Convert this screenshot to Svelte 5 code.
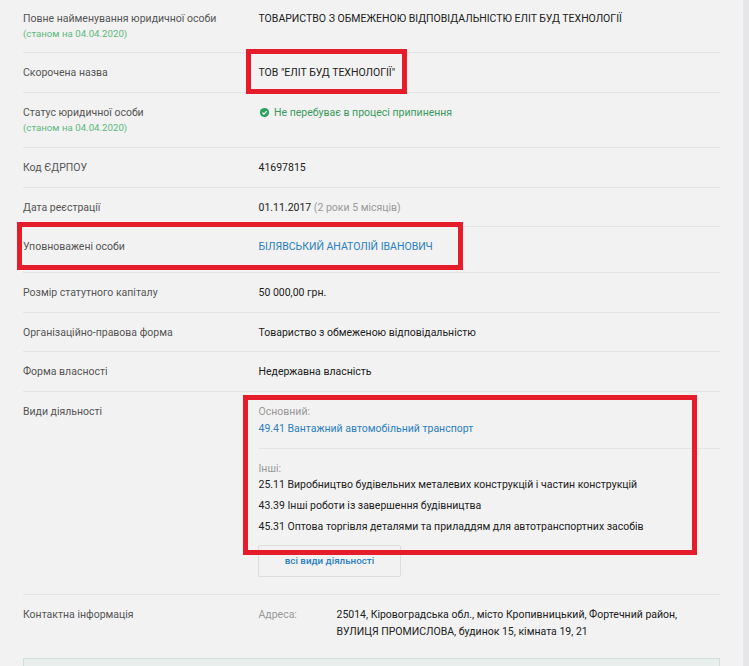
<script>
  // Company registry card. Each row: label (optional "as of" note) + value.
  const asOf = "(станом на 04.04.2020)";
  const others = [
    "25.11 Виробництво будівельних металевих конструкцій і частин конструкцій",
    "43.39 Інші роботи із завершення будівництва",
    "45.31 Оптова торгівля деталями та приладдям для автотранспортних засобів"
  ];
</script>

<div class="page">
  <div class="row first">
    <div class="lbl">Повне найменування юридичної особи<small>{asOf}</small></div>
    <div class="val">ТОВАРИСТВО З ОБМЕЖЕНОЮ ВІДПОВІДАЛЬНІСТЮ ЕЛІТ БУД ТЕХНОЛОГІЇ</div>
  </div>
  <div class="row">
    <div class="lbl">Скорочена назва</div>
    <div class="val">ТОВ "ЕЛІТ БУД ТЕХНОЛОГІЇ"</div>
  </div>
  <div class="row">
    <div class="lbl">Статус юридичної особи<small>{asOf}</small></div>
    <div class="val status">
      <svg width="11" height="11" viewBox="0 0 11 11"><circle cx="5.5" cy="5.5" r="4.6" fill="#27a35a"/><path d="M3.4 5.6l1.5 1.5 2.8-2.9" fill="none" stroke="#fff" stroke-width="1.3"/></svg>
      Не перебуває в процесі припинення
    </div>
  </div>
  <div class="row">
    <div class="lbl">Код ЄДРПОУ</div>
    <div class="val">41697815</div>
  </div>
  <div class="row">
    <div class="lbl">Дата реєстрації</div>
    <div class="val">01.11.2017 <span class="muted">(2 роки 5 місяців)</span></div>
  </div>
  <div class="row person">
    <div class="lbl">Уповноважені особи</div>
    <div class="val"><a href="#top">БІЛЯВСЬКИЙ АНАТОЛІЙ ІВАНОВИЧ</a></div>
  </div>
  <div class="row">
    <div class="lbl">Розмір статутного капіталу</div>
    <div class="val">50 000,00 грн.</div>
  </div>
  <div class="row">
    <div class="lbl">Організаційно-правова форма</div>
    <div class="val">Товариство з обмеженою відповідальністю</div>
  </div>
  <div class="row">
    <div class="lbl">Форма власності</div>
    <div class="val">Недержавна власність</div>
  </div>
  <div class="row acts">
    <div class="lbl">Види діяльності</div>
    <div class="val">
      <div class="muted">Основний:</div>
      <a href="#top">49.41 Вантажний автомобільний транспорт</a>
      <hr />
      <div class="muted others">Інші:</div>
      {#each others as o}
        <div class="act">{o}</div>
      {/each}
      <a class="btn" href="#top">всі види діяльності</a>
    </div>
  </div>
  <div class="row contact">
    <div class="lbl">Контактна інформація</div>
    <div class="val addr">
      <span class="muted">Адреса:</span>
      <span>25014, Кіровоградська обл., місто Кропивницький, Фортечний район,<br />ВУЛИЦЯ ПРОМИСЛОВА, будинок 15, кімната 19, 21</span>
    </div>
  </div>
  <div class="note"></div>

  <!-- red annotation frames and the scrollbar track sit over the page -->
  <div class="mark m1"></div>
  <div class="mark m2"></div>
  <div class="mark m3"></div>
  <div class="track"></div>
</div>

<style>
  :global(body) { margin: 0; background: #f2f2f2; }
  .page {
    position: relative; height: 666px; overflow: hidden; box-sizing: border-box; padding: 0 29px 0 23px;
    font: 10.5px/17px Roboto, sans-serif; color: #212121;
  }
  .row { display: flex; border-bottom: 1px solid #e3e6e5; padding: 11.2px 0 10.4px; }
  .first { margin-top: -1px; padding-top: 10.8px; padding-bottom: 9.3px; }
  .person { padding-bottom: 16.6px; }
  .lbl { width: 235.5px; flex: none; color: #555; }
  .lbl small { display: block; font-size: 9.7px; color: #5cb87a; margin: 0.4px 0 2.5px; line-height: 13px; }
  .val { flex: 1; }
  .status { color: #3a9a5c; display: flex; align-items: flex-start; gap: 4.5px; }
  .status svg { flex: none; margin-top: 3px; }
  .muted { color: #999; }
  a { color: #2b7fc3; text-decoration: none; }
  hr { border: 0; border-top: 1px solid #e3e6e5; margin: 11.5px 0 11px; }
  .others { margin-bottom: -1px; }
  .act { margin-bottom: 4px; }
  .btn {
    display: block; width: 143px; height: 32px; box-sizing: border-box; margin: 9.5px 0 7px -0.5px;
    border: 1px solid #ddd; border-radius: 2px; text-align: center; font-size: 9.8px; font-weight: 500; line-height: 30px;
  }
  .contact { border-bottom: 0; }
  .addr { display: flex; }
  .addr .muted { width: 78px; flex: none; }
  .note { height: 60px; margin-top: 7px; border: 1px solid #cfe0da; background: #e8efec; }
  .mark { position: absolute; border: 5px solid #e51d2a; box-sizing: border-box; }
  .m1 { left: 246px; top: 49px; width: 161px; height: 45px; }
  .m2 { left: 17px; top: 222px; width: 446px; height: 48px; }
  .m3 { left: 243px; top: 395px; width: 454px; height: 160px; }
  .track { position: absolute; top: 0; right: 0; bottom: 0; width: 6px; background: #e6e6e8; }
</style>
